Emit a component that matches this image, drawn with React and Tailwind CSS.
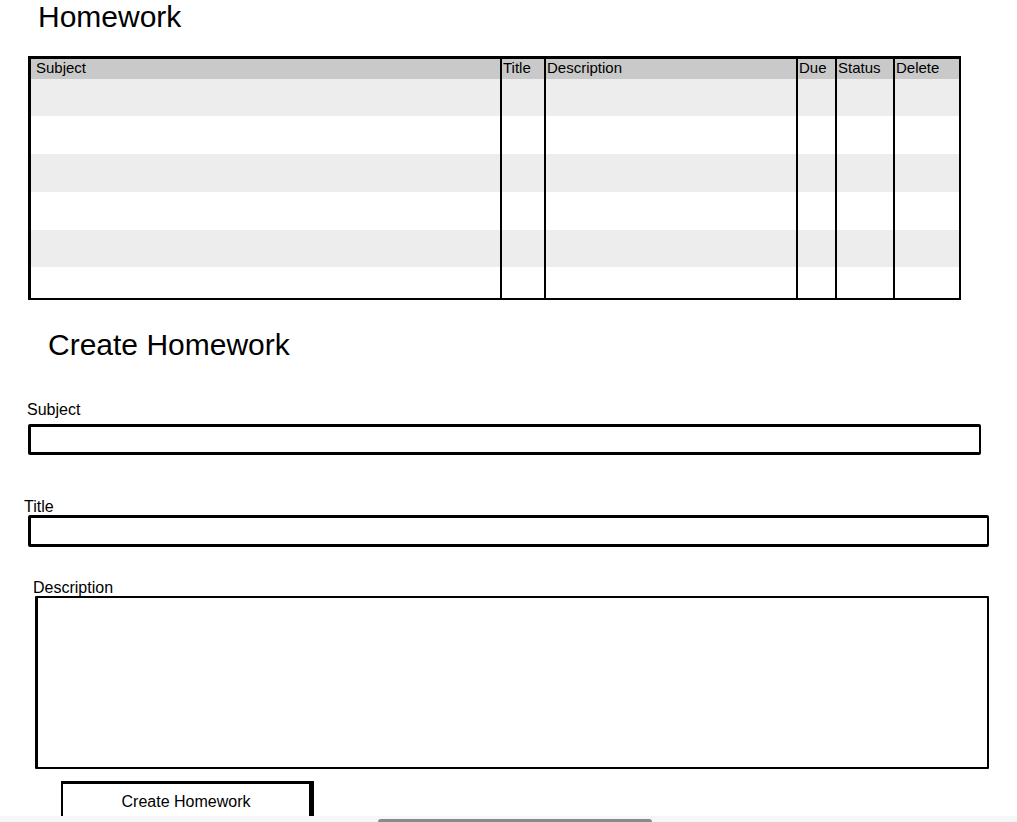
const rows = [
  { h: 'h-[37px]', bg: 'bg-[#ededed]' },
  { h: 'h-[38px]', bg: 'bg-white' },
  { h: 'h-[38px]', bg: 'bg-[#ededed]' },
  { h: 'h-[38px]', bg: 'bg-white' },
  { h: 'h-[37px]', bg: 'bg-[#ededed]' },
  { h: 'h-[31px]', bg: 'bg-white' },
];

const columns = [
  { label: 'Subject', w: 'w-[469px]' },
  { label: 'Title', w: 'w-[44px]' },
  { label: 'Description', w: 'w-[252px]' },
  { label: 'Due', w: 'w-[39px]' },
  { label: 'Status', w: 'w-[58px]' },
  { label: 'Delete', w: 'w-[66px]' },
];

function HomeworkTable() {
  return (
    <div className="ml-[28px] w-[933px] border-[3px] border-b-2 border-r-2 border-black">
      <table className="table-fixed border-separate border-spacing-0 w-full">
        <thead>
          <tr className="h-[20px] bg-[#c9c9c9]">
            {columns.map((c, i) => (
              <th
                key={c.label}
                className={`${c.w} p-0 text-left align-top font-normal text-[15px] leading-[17px] text-black ${i > 0 ? 'border-l-2 border-black pl-[1px]' : 'pl-[5px]'}`}
              >
                {c.label}
              </th>
            ))}
          </tr>
        </thead>
        <tbody>
          {rows.map((r, ri) => (
            <tr key={ri} className={`${r.h} ${r.bg}`}>
              {columns.map((c, i) => (
                <td key={c.label} className={`p-0 ${i > 0 ? 'border-l-2 border-black' : ''}`} />
              ))}
            </tr>
          ))}
        </tbody>
      </table>
    </div>
  );
}

export default function App() {
  return (
    <div
      className="relative h-[822px] w-[1017px] overflow-hidden bg-white text-black"
      style={{ fontFamily: '"Liberation Sans", Arial, sans-serif' }}
    >
      <h1 className="pl-[38px] pt-0 text-[30px] leading-[34px] font-normal">Homework</h1>

      <div className="mt-[22px]">
        <HomeworkTable />
      </div>

      <h2 className="mt-[28px] pl-[48px] text-[30px] leading-[34px] font-normal">Create Homework</h2>

      <form className="flex flex-col">
        <label className="mt-[39px] pl-[27px] text-[16px] leading-[18px]">Subject</label>
        <input
          type="text"
          className="mt-[5px] ml-[28px] h-[31px] w-[953px] rounded-[2px] border-[3px] border-r-2 border-black outline-none"
        />

        <label className="mt-[43px] pl-[24px] text-[16px] leading-[18px]">Title</label>
        <input
          type="text"
          className="mt-[-1px] ml-[28px] h-[32px] w-[961px] rounded-[2px] border-[3px] border-r-2 border-black outline-none"
        />

        <label className="mt-[32px] pl-[33px] text-[16px] leading-[18px]">Description</label>
        <textarea className="ml-[35px] mt-[-1px] h-[173px] w-[954px] resize-none rounded-[1px] border-2 border-l-[3px] border-black outline-none" />

        <div className="mt-[12px] ml-[61px]">
          <button
            type="button"
            className="flex h-[44px] w-[253px] items-start justify-center border-[2px] border-t-[3px] border-r-[5px] border-black bg-white pt-[9px] text-[16px] leading-[18px]"
          >
            Create Homework
          </button>
        </div>
      </form>

      <div className="absolute bottom-0 left-0 h-[6px] w-full bg-[#f6f6f6]">
        <div className="absolute left-[378px] top-[3px] h-[3px] w-[274px] rounded-t-[3px] bg-[#8a8a8a]" />
      </div>
    </div>
  );
}
